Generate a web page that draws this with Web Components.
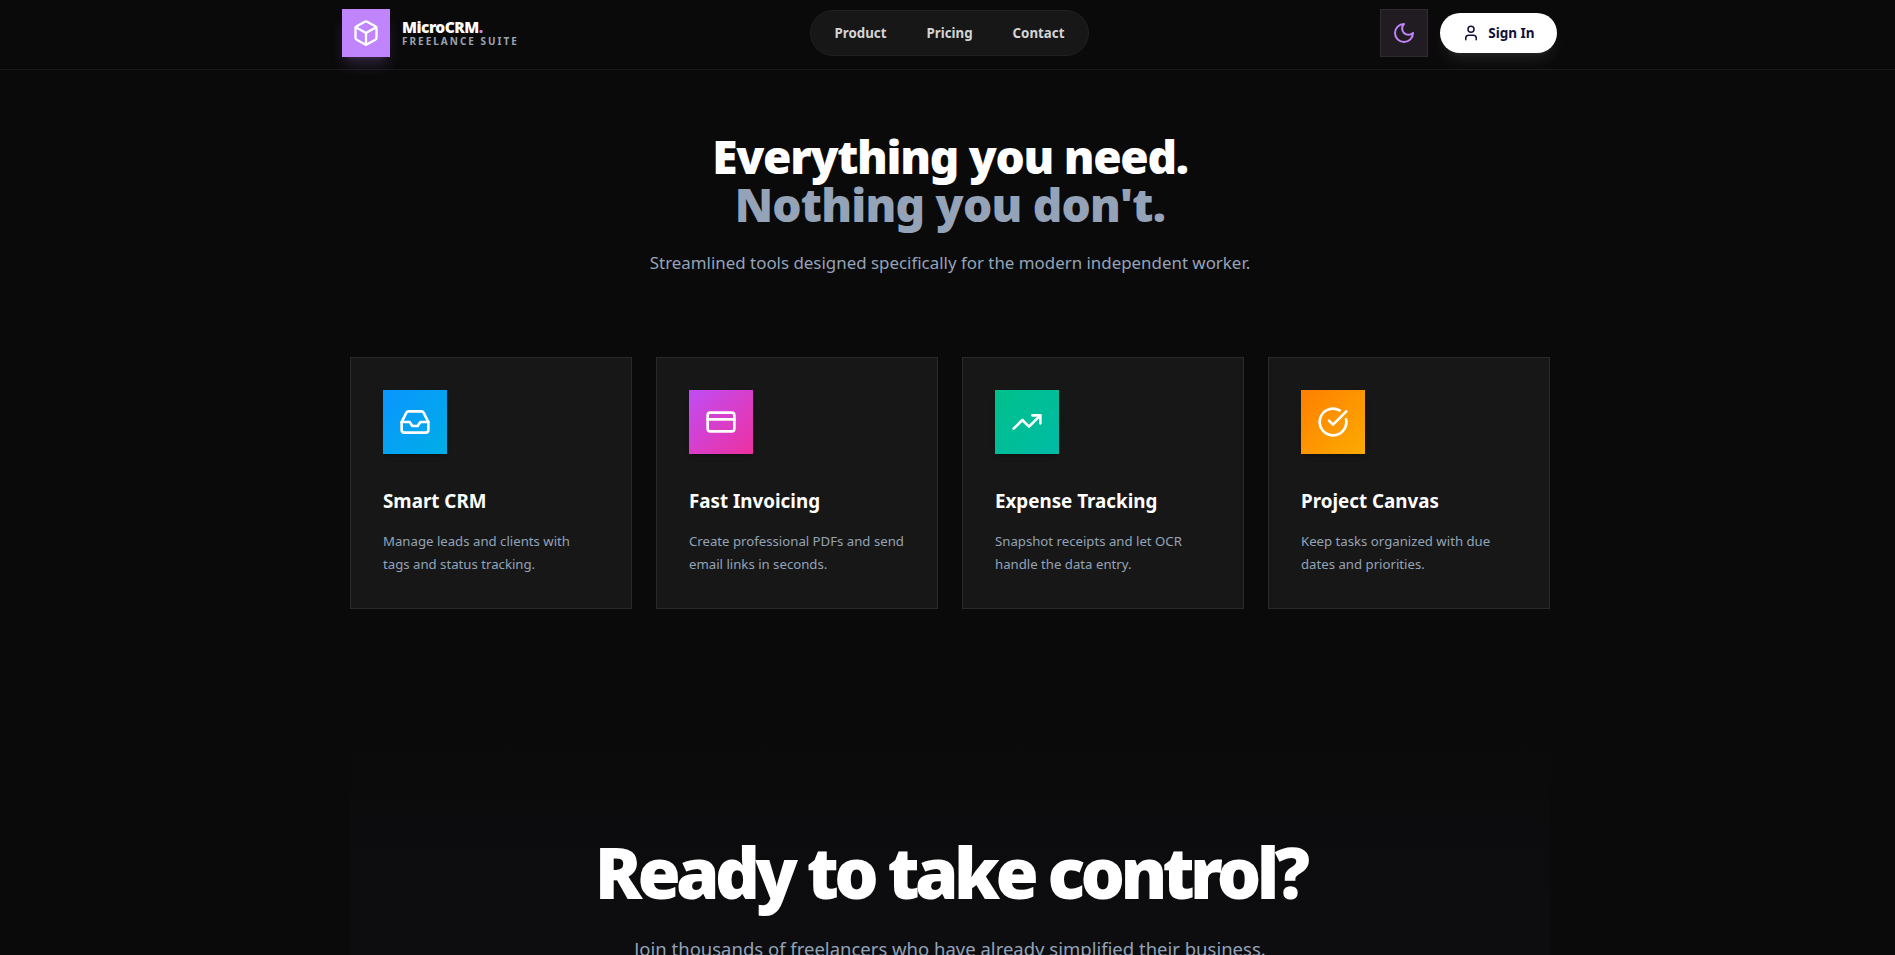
<!doctype html>
<html lang="en"><head><meta charset="utf-8"><title>MicroCRM</title>
<style>
html,body{margin:0;padding:0;background:#0a0a0a;height:955px;overflow:hidden}
body{font-family:"Noto Sans","Open Sans",sans-serif;color:#fff}
</style></head><body>
<micro-page>
  <micro-nav slot="nav"></micro-nav>
  <micro-hero slot="hero" title-a="Everything you need." title-b="Nothing you don't." sub="Streamlined tools designed specifically for the modern independent worker."></micro-hero>
  <feature-grid slot="grid">
    <feature-card icon="inbox" grad="#0a95ff,#00aee6" heading="Smart CRM">Manage leads and clients with tags and status tracking.</feature-card>
    <feature-card icon="card" grad="#c04df5,#ee30a0" heading="Fast Invoicing">Create professional PDFs and send email links in seconds.</feature-card>
    <feature-card icon="trend" grad="#00c08a,#00bba6" heading="Expense Tracking">Snapshot receipts and let OCR handle the data entry.</feature-card>
    <feature-card icon="check" grad="#ff7f00,#fbab00" heading="Project Canvas">Keep tasks organized with due dates and priorities.</feature-card>
  </feature-grid>
  <micro-cta slot="cta" heading="Ready to take control?" sub="Join thousands of freelancers who have already simplified their business."></micro-cta>
</micro-page>
<script>
const ICONS={
 box:'<path d="M21 8a2 2 0 0 0-1-1.73l-7-4a2 2 0 0 0-2 0l-7 4A2 2 0 0 0 3 8v8a2 2 0 0 0 1 1.73l7 4a2 2 0 0 0 2 0l7-4A2 2 0 0 0 21 16Z"/><path d="m3.3 7 8.7 5 8.7-5"/><path d="M12 22V12"/>',
 moon:'<path d="M12 3a6 6 0 0 0 9 9 9 9 0 1 1-9-9Z"/>',
 user:'<path d="M19 21v-2a4 4 0 0 0-4-4H9a4 4 0 0 0-4 4v2"/><circle cx="12" cy="7" r="4"/>',
 inbox:'<polyline points="22 12 16 12 14 15 10 15 8 12 2 12"/><path d="M5.45 5.11 2 12v6a2 2 0 0 0 2 2h16a2 2 0 0 0 2-2v-6l-3.45-6.89A2 2 0 0 0 16.76 4H7.24a2 2 0 0 0-1.79 1.11z"/>',
 card:'<rect width="20" height="14" x="2" y="5" rx="2"/><line x1="2" x2="22" y1="10" y2="10"/>',
 trend:'<polyline points="22 7 13.5 15.5 8.5 10.5 2 17"/><polyline points="16 7 22 7 22 13"/>',
 check:'<path d="M21.801 10A10 10 0 1 1 17 3.335"/><path d="m9 11 3 3L22 4"/>'
};
const svg=(n,s,w=2)=>`<svg xmlns="http://www.w3.org/2000/svg" width="${s}" height="${s}" viewBox="0 0 24 24" fill="none" stroke="currentColor" stroke-width="${w}" stroke-linecap="round" stroke-linejoin="round" aria-hidden="true">${ICONS[n]}</svg>`;
class Base extends HTMLElement{
  connectedCallback(){ if(!this.shadowRoot){this.attachShadow({mode:'open'}).innerHTML=this.render();} }
}
customElements.define('micro-page',class extends Base{render(){return `<style>
:host{display:block;width:1900px;font-family:inherit}
main{display:flex;flex-direction:column;align-items:center}
</style><slot name="nav"></slot><main><slot name="hero"></slot><slot name="grid"></slot><slot name="cta"></slot></main>`}});
customElements.define('micro-nav',class extends Base{render(){return `<style>
:host{display:block;border-bottom:1px solid #1a1a1a;box-sizing:border-box;height:70px}
.in{box-sizing:border-box;width:1216px;margin:0 auto;padding:9px 1px 0 0;display:grid;grid-template-columns:1fr auto 1fr;align-items:center}
.brand{display:flex;align-items:center;gap:12px}
.logo{width:48px;height:48px;background:#c084fc;display:flex;align-items:center;justify-content:center;color:#fff;box-shadow:0 10px 15px -3px rgba(192,132,252,.2),0 4px 6px -4px rgba(192,132,252,.2)}
.txt{display:flex;flex-direction:column}
.name{font-size:15.5px;line-height:15px;font-weight:900;letter-spacing:-.5px;color:#fff}
.name i{font-style:normal;color:#c084fc}
.tag{font-size:10px;line-height:12px;font-weight:700;letter-spacing:2px;color:#9ca3af;white-space:nowrap}
.links{display:flex;gap:40px;align-items:center;height:44px;padding:0 24px;background:#171717;border:1px solid #221f20;border-radius:23px}
.links a{font-size:13.3px;font-weight:700;color:#d4d4d4;text-decoration:none}
.act{display:flex;justify-content:flex-end;align-items:center;gap:12px}
.moon{box-sizing:border-box;width:48px;height:48px;display:flex;align-items:center;justify-content:center;background:#211c21;border:1px solid #2e2a2e;color:#c084fc}
.sign{box-sizing:border-box;width:117px;height:40px;display:flex;align-items:center;justify-content:center;gap:8px;background:#fff;border-radius:20px;color:#10103a;font-size:13.5px;font-weight:700;box-shadow:0 10px 15px -3px rgba(255,255,255,.08),0 4px 6px -4px rgba(255,255,255,.08)}
</style><div class="in">
<div class="brand"><div class="logo">${svg('box',28)}</div><div class="txt"><span class="name">MicroCRM<i>.</i></span><span class="tag">FREELANCE SUITE</span></div></div>
<nav class="links"><a>Product</a><a>Pricing</a><a>Contact</a></nav>
<div class="act"><div class="moon">${svg('moon',24)}</div><div class="sign">${svg('user',18)}<span>Sign In</span></div></div>
</div>`}});
customElements.define('micro-hero',class extends Base{render(){const a=k=>this.getAttribute(k);return `<style>
:host{display:block;text-align:center;padding-top:62px}
h2{margin:0;font-size:46px;line-height:48px;font-weight:900;letter-spacing:-1.3px;color:#fff}
h2 span{display:block;color:#94a3b8;letter-spacing:-.76px}
p{margin:21px 0 0;font-size:16.9px;line-height:28px;color:#94a3b8}
</style><h2>${a('title-a')}<span>${a('title-b')}</span></h2><p>${a('sub')}</p>`}});
customElements.define('feature-grid',class extends Base{render(){return `<style>
:host{display:grid;grid-template-columns:repeat(4,282px);gap:24px;margin-top:80px}
</style><slot></slot>`}});
customElements.define('feature-card',class extends Base{render(){const a=k=>this.getAttribute(k);return `<style>
:host{display:block;box-sizing:border-box;height:252px;padding:32px;background:#171717;border:1px solid #2a2a2a}
.ic{width:64px;height:64px;display:flex;align-items:center;justify-content:center;color:#fff;background:linear-gradient(135deg,${a('grad')});box-shadow:0 4px 6px -4px rgba(0,0,0,.5)}
h3{margin:33px 0 0;font-size:18.8px;line-height:28px;font-weight:700;color:#fff}
p{margin:15px 0 0;font-size:13.2px;line-height:23px;color:#94a3b8}
</style><div class="ic">${svg(a('icon'),32)}</div><h3>${a('heading')}</h3><p><slot></slot></p>`}});
customElements.define('micro-cta',class extends Base{render(){const a=k=>this.getAttribute(k);return `<style>
:host{display:block;box-sizing:border-box;width:1200px;margin-top:122px;padding-top:105px;text-align:center;background:linear-gradient(#0a0a0a,#0d0d10 170px)}
h2{margin:0;font-size:70px;line-height:72px;font-weight:900;letter-spacing:-4.7px;color:#fff}
p{margin:27px 0 0;font-size:18.5px;line-height:28px;color:#94a3b8}
</style><h2>${a('heading')}</h2><p>${a('sub')}</p>`}});
</script>
</body></html>
